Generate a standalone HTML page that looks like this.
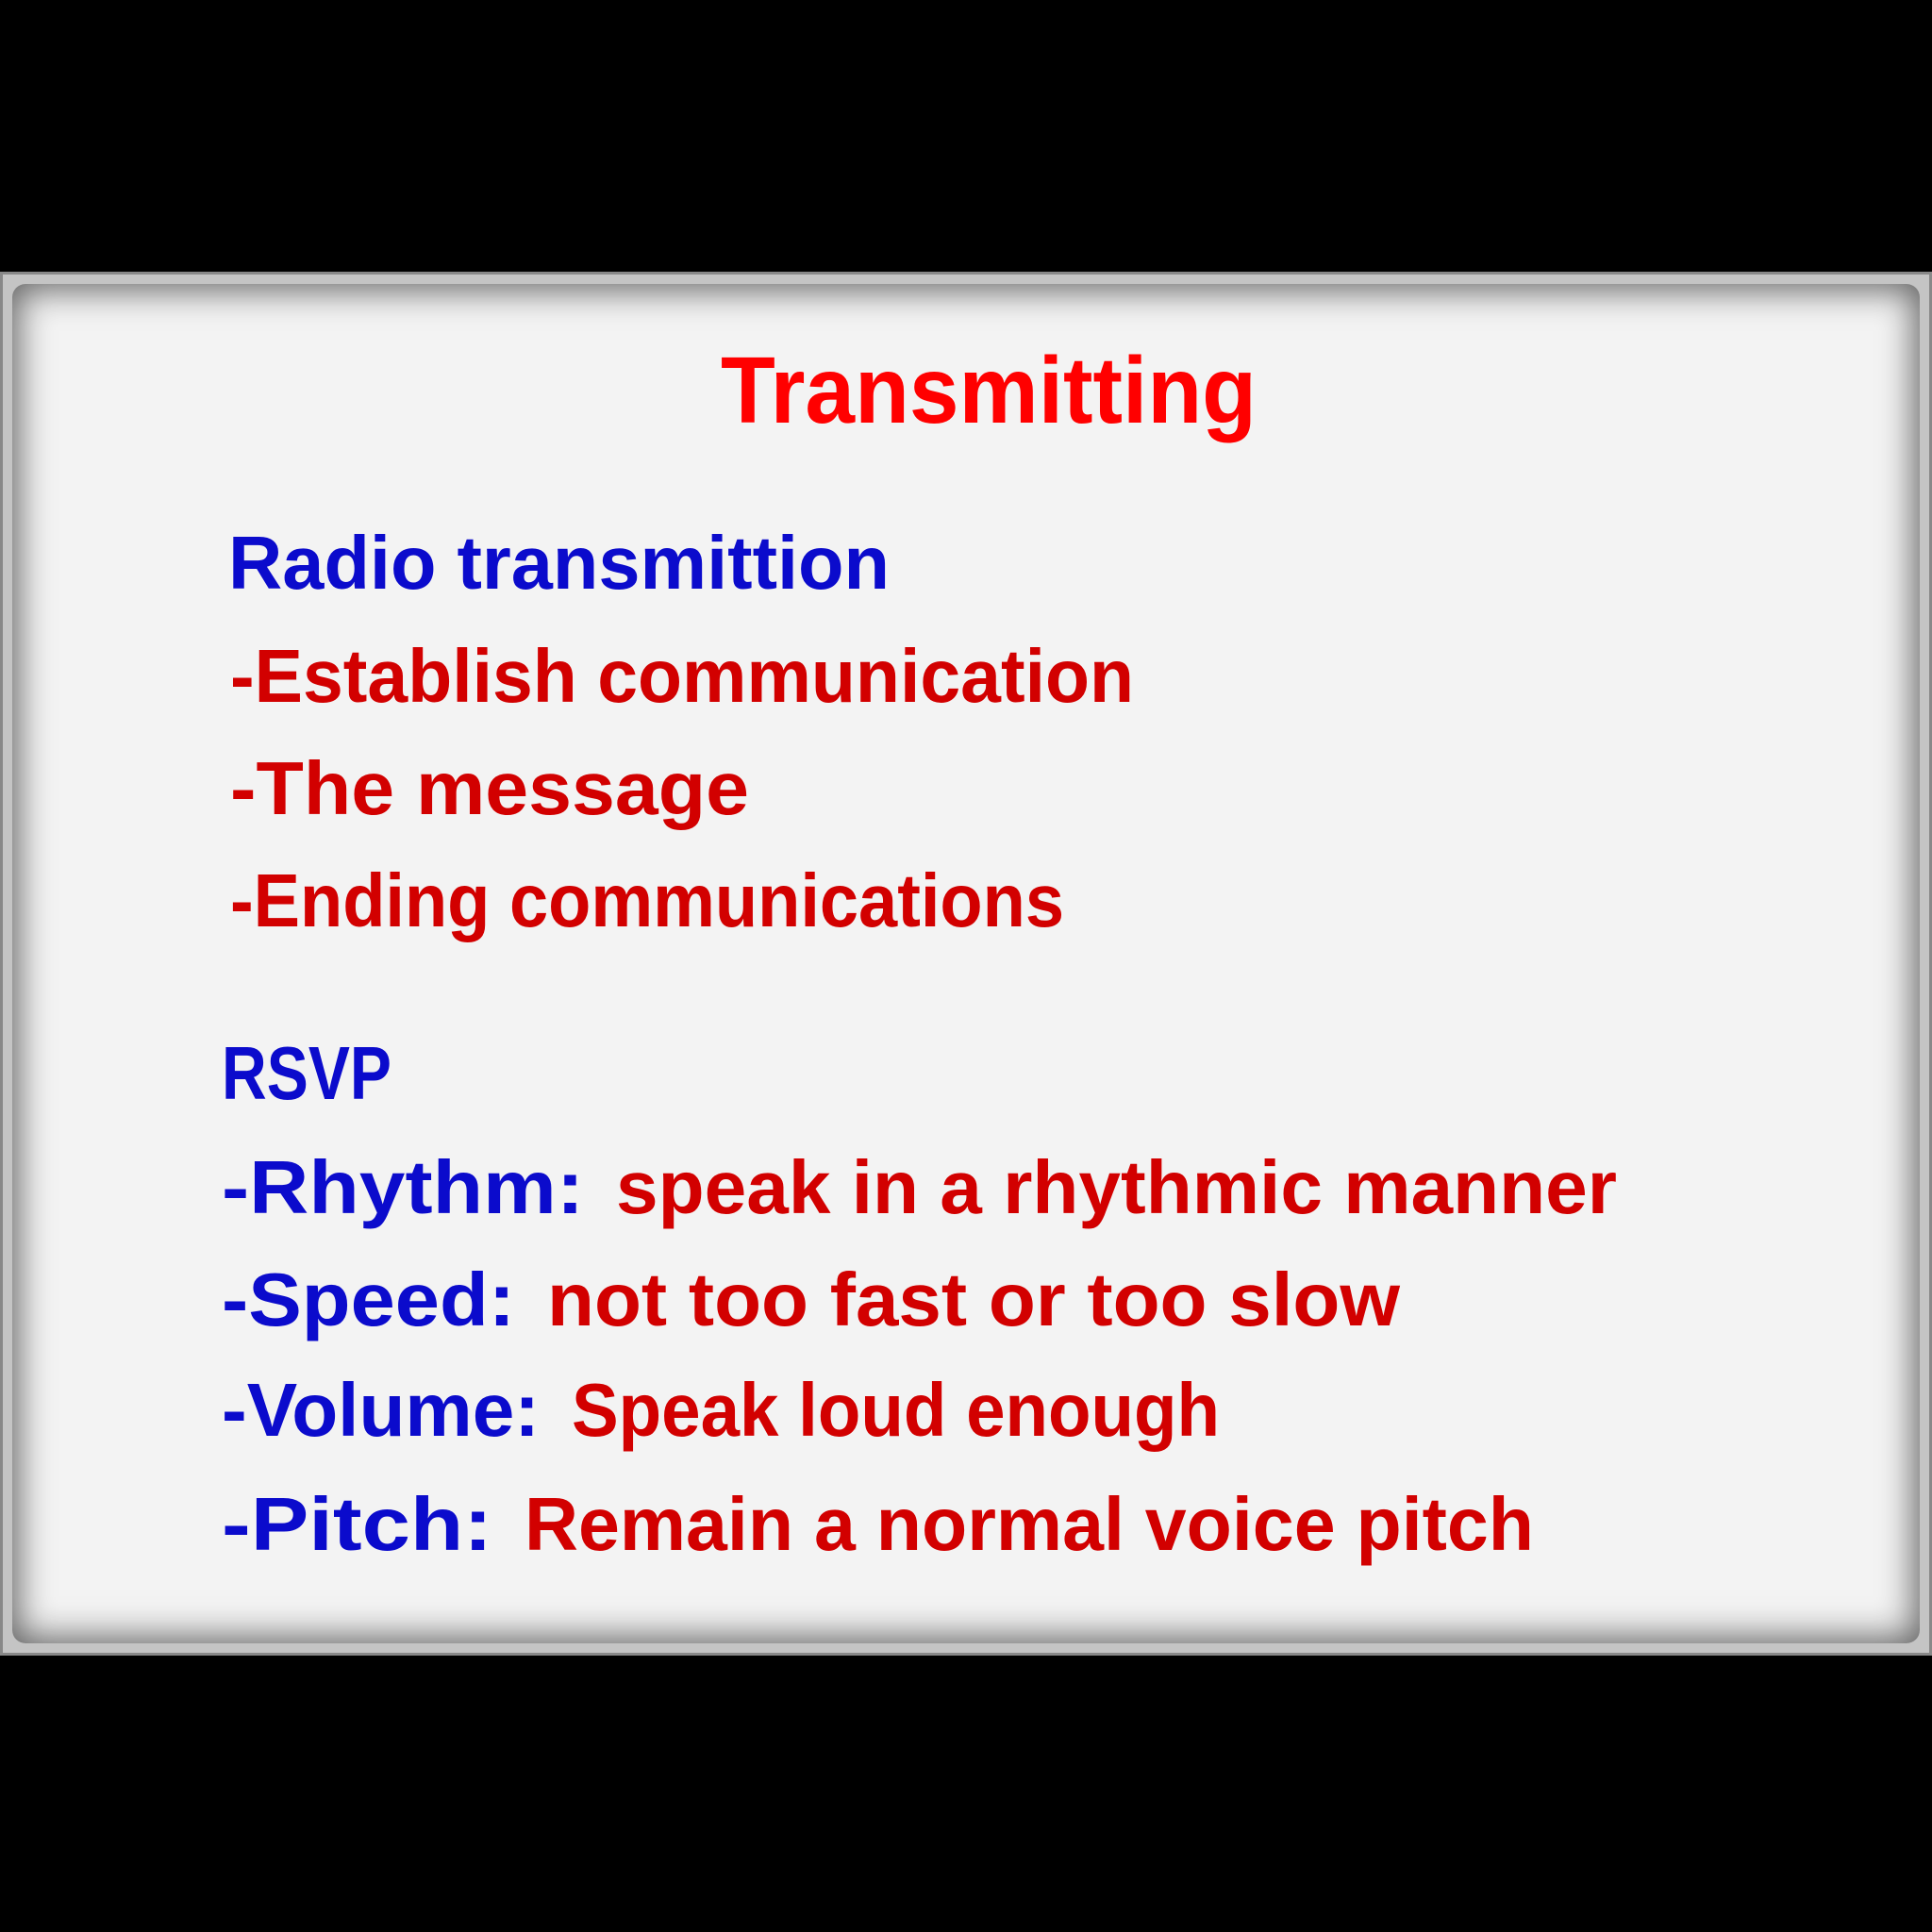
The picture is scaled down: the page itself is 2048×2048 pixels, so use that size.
<!DOCTYPE html>
<html><head><meta charset="utf-8"><style>
html,body{margin:0;padding:0;background:#000;width:2048px;height:2048px;overflow:hidden}
.frame{position:absolute;left:0;top:288px;width:2048px;height:1467px;background:#c4c4c4;box-shadow:inset 0 0 0 3px #888}
.panel{position:absolute;left:13px;top:301px;width:2022px;height:1441px;background:#f3f3f3;border-radius:14px;box-shadow:inset 0 0 36px 6px rgba(0,0,0,0.6)}
svg{position:absolute;left:0;top:0}
text{font-family:"Liberation Sans",sans-serif;font-weight:bold}
.b{fill:#0b0bcc}.r{fill:#d20000}
</style></head><body>
<div class="frame"></div><div class="panel"></div>
<svg width="2048" height="2048" viewBox="0 0 2048 2048">
<text x="764" y="448" textLength="568" lengthAdjust="spacingAndGlyphs" font-size="100" fill="#f00">Transmitting</text>
<g font-size="80">
<text class="b" x="242" y="624" textLength="701" lengthAdjust="spacingAndGlyphs">Radio transmittion</text>
<text class="r" x="244" y="744" textLength="958" lengthAdjust="spacingAndGlyphs">-Establish communication</text>
<text class="r" x="244" y="863" textLength="550" lengthAdjust="spacingAndGlyphs">-The message</text>
<text class="r" x="244" y="982" textLength="884" lengthAdjust="spacingAndGlyphs">-Ending communications</text>
<text class="b" x="235" y="1165" textLength="180" lengthAdjust="spacingAndGlyphs">RSVP</text>
<text class="b" x="235" y="1286" textLength="384" lengthAdjust="spacingAndGlyphs">-Rhythm:</text>
<text class="r" x="653" y="1286" textLength="1061" lengthAdjust="spacingAndGlyphs">speak in a rhythmic manner</text>
<text class="b" x="235" y="1405" textLength="311" lengthAdjust="spacingAndGlyphs">-Speed:</text>
<text class="r" x="580" y="1405" textLength="904" lengthAdjust="spacingAndGlyphs">not too fast or too slow</text>
<text class="b" x="235" y="1522" textLength="337" lengthAdjust="spacingAndGlyphs">-Volume:</text>
<text class="r" x="606" y="1522" textLength="687" lengthAdjust="spacingAndGlyphs">Speak loud enough</text>
<text class="b" x="235" y="1643" textLength="287" lengthAdjust="spacingAndGlyphs">-Pitch:</text>
<text class="r" x="556" y="1643" textLength="1070" lengthAdjust="spacingAndGlyphs">Remain a normal voice pitch</text>
</g>
</svg>
</body></html>
